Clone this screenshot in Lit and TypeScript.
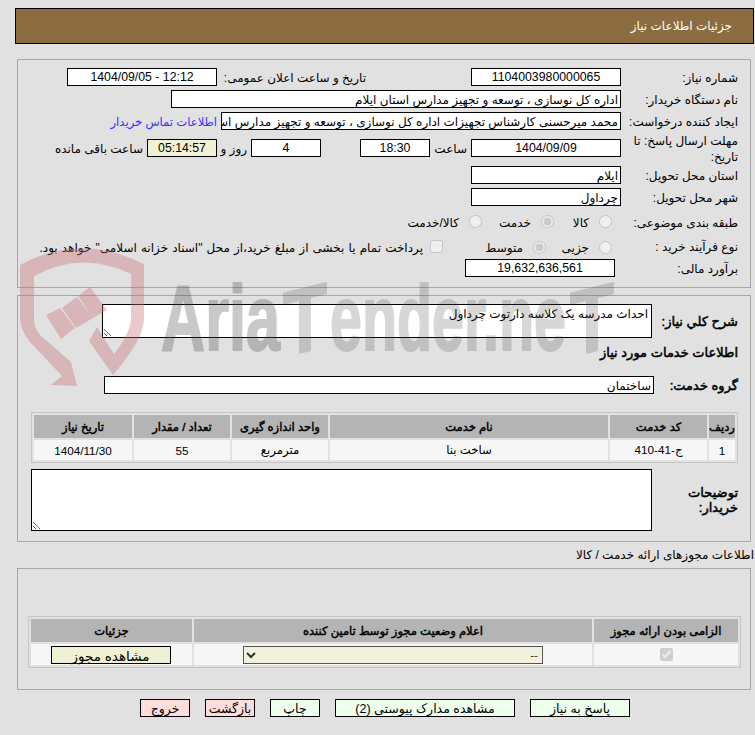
import { LitElement, html, css, svg } from "lit";
import { customElement } from "lit/decorators.js";

const serviceCols = ["c98", "c96", "c96", "c278", "c97", "c26"];

@customElement("app-root")
export class AppRoot extends LitElement {
  static styles = css`
    :host {
      display: block;
      position: relative;
      width: 755px;
      height: 735px;
      overflow: hidden;
      background: #e1e1e1;
      font-family: "Liberation Sans", "DejaVu Sans", sans-serif;
      font-size: 12px;
      color: #000;
      box-sizing: border-box;
      padding-top: 8px;
    }
    * { box-sizing: border-box; }
    .header {
      width: 739px;
      height: 36px;
      margin-left: 15px;
      background: #8c6d41;
      border: 1px solid #000;
      color: #fff;
      direction: rtl;
      display: flex;
      align-items: center;
      padding-right: 21px;
      font-size: 12px;
      line-height: 1;
    }
    .panel {
      width: 734px;
      margin-left: 17px;
      border: 1px solid #a6a6a6;
      direction: rtl;
      padding: 8px 12px 10px 0;
    }
    .p1 { margin-top: 15px; height: 229px; }
    .p2 { margin-top: 7px; height: 247px; }
    .p3 { height: 122px; padding: 47px 9px 0 0; }
    .section-title {
      direction: rtl;
      height: 26px;
      padding-right: 1px;
      display: flex;
      align-items: center;
    }
    .row { display: flex; align-items: center; height: 18px; margin-bottom: 4px; white-space: nowrap; }
    .tall { height: 28px; }
    .r7 { height: 22px; }
    .r8 { height: 20px; margin-bottom: 3px; }
    .r7 .l117 { padding-top: 4px; }
    .r8 input[type="radio"] { margin-top: 2px; }
    .l117 { width: 117px; flex: none; white-space: normal; line-height: 16px; padding-top: 2px; }
    .box {
      height: 18px;
      flex: none;
      background: #fff;
      border: 1px solid #000;
      display: flex;
      align-items: center;
      overflow: hidden;
      white-space: nowrap;
      padding: 2px 2px 0;
      line-height: 1;
    }
    .center { justify-content: center; font-size: 12.3px; padding: 0 2px; }
    .latin { direction: ltr; }
    .w150 { width: 150px; }
    .w450 { width: 450px; }
    .w400 { width: 400px; }
    .w70 { width: 70px; }
    .w550 { width: 550px; }
    .timer { background: #f0f0d2; }
    .ms105 { margin-inline-start: 105px; width: 149px; flex: none; padding-top: 2px; }
    .hour-label { width: 37px; flex: none; margin-inline-start: 4px; padding-top: 2px; }
    .day-box { margin-inline-start: 39px; }
    .day-label { width: 30px; flex: none; margin-inline-start: 4px; padding-top: 2px; }
    .remain { margin-inline-start: 4px; padding-top: 2px; }
    .link { color: #3333ff; margin-inline-start: 4px; font-size: 11.6px; padding-top: 1px; }
    .opt { display: flex; align-items: center; flex: none; }
    .opt input { margin: 0; flex: none; }
    .o66 { width: 67px; padding-right: 9px; }
    .o72 { width: 72px; }
    .o73 { width: 75px; padding-right: 9px; }
    .o103 { width: 103px; }
    .opt span { margin-inline-start: 10px; padding-top: 3px; }
    .opt .chk { margin-inline-start: 7px; word-spacing: 0.8px; }
    .l117f { width: 123px; flex: none; padding-top: 2px; }
    .bold { font-weight: 400; font-size: 13px; -webkit-text-stroke: 0.5px #000; }
    .l86 { width: 86px; flex: none; }
    .l84 { width: 84px; flex: none; }
    textarea {
      display: block;
      flex: none;
      background: #fff;
      border: 1px solid #000;
      border-radius: 0;
      padding: 2px 3px;
      margin: 0;
      font: inherit;
      direction: rtl;
      outline: none;
    }
    .ta1 { width: 550px; height: 34px; }
    .ta2 { width: 621px; height: 62px; }
    .row-ta1 { height: 34px; margin-bottom: 0; }
    .heading { height: 28px; margin-bottom: 10px; }
    .row-group { margin-bottom: 18px; }
    .row-ta2 { height: 62px; margin-top: 6px; margin-bottom: 0; }
    .l2 { width: 86px; flex: none; white-space: normal; line-height: 15px; }
    table {
      table-layout: fixed;
      border-collapse: separate;
      border-spacing: 2px;
      border: 1px solid #c6c6c6;
      direction: rtl;
    }
    .t-service { width: 707px; }
    .t-license { width: 713px; }
    th, td { padding: 0; text-align: center; overflow: hidden; white-space: nowrap; }
    th { background: #b4b4b4; height: 23px; font-size: 11.5px; font-weight: 400; -webkit-text-stroke: 0.45px #000; }
    td { background: #f6f6f6; font-size: 11.7px; }
    .t-service td { height: 20px; }
    .t-license td { height: 21px; }
    .c98 { width: 98px; } .c96 { width: 96px; } .c278 { width: 278px; } .c97 { width: 97px; } .c26 { width: 26px; }
    .c161 { width: 161px; } .c398 { width: 398px; } .c144 { width: 144px; }
    .cell-fill { display: flex; justify-content: center; align-items: center; }
    .see {
      width: 120px;
      height: 18px;
      padding: 1px 0 0;
      margin-inline-start: 2px;
      background: #f0f0d2;
      border: 1px solid #000;
      font: inherit;
      font-size: 13.5px;
      color: #000;
    }
    select {
      display: block;
      width: 300px;
      height: 18px;
      margin: 0 auto;
      background-color: #f2f2dc;
      border: 1px solid #555;
      border-radius: 0;
      font: inherit;
      direction: rtl;
      color: #333;
      opacity: 1;
    }
    .actions {
      direction: rtl;
      display: flex;
      gap: 15px;
      margin: 9px 125px 0 0;
    }
    .btn {
      height: 18px;
      padding: 1px 0 0;
      border: 1px solid #000;
      font: inherit;
      font-size: 12.5px;
      color: #000;
      background: #eeffee;
    }
    .b100 { width: 100px; } .b180 { width: 180px; } .b50 { width: 50px; }
    .red { background: #ffdddd; }
    .wm { position: absolute; left: 0; top: 0; pointer-events: none; }
    .wm-a { opacity: 0.3; }
    .wm-b { opacity: 0.22; }
    .wm-t {
      font-family: "Liberation Sans", sans-serif;
      font-weight: 700;
      font-size: 92px;
      fill: rgb(78, 78, 78);
      stroke: rgb(78, 78, 78);
      stroke-width: 2px;
      stroke-linejoin: round;
    }
    .wm-s { fill: rgb(200, 105, 110); fill-opacity: 0.37; }
  `;

  private radio(checked: boolean) {
    return html`<input type="radio" disabled ?checked=${checked} />`;
  }

  private watermark() {
    return svg`<svg class="wm" width="755" height="735" viewBox="0 0 755 735">
      <path class="wm-s" fill-rule="evenodd" d="M20 265 Q80 232 144 264 L144 320 Q143 340 113 375 L89 341 L97 327 L114 354 Q131 332 131 318 L131 274 Q82 250 34 276 L34 318 Q34 328 40 335 L71 362 L77 386 L51 385 L62 376 L30 342 Q20 330 20 318 Z"/>
      <path class="wm-s" d="M46 315 L60 308 L75 328 L61 339 Z M62 308 L77 297 L93 318 L76 328 Z M78 296 L90 287 L107 310 L93 318 Z"/>
      <g class="wm-a">
        <text class="wm-t" x="161" y="350" textLength="119" lengthAdjust="spacingAndGlyphs">Aria</text>
      </g>
      <g class="wm-b">
        <text class="wm-t" transform="translate(283 357) skewY(-14)" textLength="44" lengthAdjust="spacingAndGlyphs">T</text>
        <text class="wm-t" x="330" y="350" textLength="236" lengthAdjust="spacingAndGlyphs">ender.ne</text>
        <text class="wm-t" transform="translate(570 357) skewY(-14)" textLength="44" lengthAdjust="spacingAndGlyphs">T</text>
      </g>
    </svg>`;
  }

  render() {
    return html`
      <div class="header">جزئیات اطلاعات نیاز</div>

      <section class="panel p1">
        <div class="row">
          <div class="l117">شماره نیاز:</div>
          <div class="box w150 center">1104003980000065</div>
          <div class="ms105">تاریخ و ساعت اعلان عمومی:</div>
          <div class="box w150 center latin">1404/09/05 - 12:12</div>
        </div>
        <div class="row">
          <div class="l117">نام دستگاه خریدار:</div>
          <div class="box w450">اداره کل نوسازی ، توسعه و تجهیز مدارس استان ایلام</div>
        </div>
        <div class="row">
          <div class="l117">ایجاد کننده درخواست:</div>
          <div class="box w400">محمد میرحسنی کارشناس تجهیزات اداره کل نوسازی ، توسعه و تجهیز مدارس استان ایلام</div>
          <a class="link">اطلاعات تماس خریدار</a>
        </div>
        <div class="row tall">
          <div class="l117">مهلت ارسال پاسخ: تا تاریخ:</div>
          <div class="box w150 center">1404/09/09</div>
          <div class="hour-label">ساعت</div>
          <div class="box w70 center">18:30</div>
          <div class="box w70 center day-box">4</div>
          <div class="day-label">روز و</div>
          <div class="box w70 center timer">05:14:57</div>
          <div class="remain">ساعت باقی مانده</div>
        </div>
        <div class="row">
          <div class="l117">استان محل تحویل:</div>
          <div class="box w150">ایلام</div>
        </div>
        <div class="row">
          <div class="l117">شهر محل تحویل:</div>
          <div class="box w150">چرداول</div>
        </div>
        <div class="row r7">
          <div class="l117">طبقه بندی موضوعی:</div>
          <label class="opt o66">${this.radio(false)}<span>کالا</span></label>
          <label class="opt o72">${this.radio(true)}<span>خدمت</span></label>
          <label class="opt">${this.radio(false)}<span>کالا/خدمت</span></label>
        </div>
        <div class="row r8">
          <div class="l117">نوع فرآیند خرید :</div>
          <label class="opt o73">${this.radio(false)}<span>جزیی</span></label>
          <label class="opt o103">${this.radio(true)}<span>متوسط</span></label>
          <label class="opt"><input type="checkbox" disabled /><span class="chk">پرداخت تمام یا بخشی از مبلغ خرید،از محل "اسناد خزانه اسلامی" خواهد بود.</span></label>
        </div>
        <div class="row">
          <div class="l117f">برآورد مالی:</div>
          <div class="box w150 center">19,632,636,561</div>
        </div>
      </section>

      <section class="panel p2">
        <div class="row row-ta1">
          <div class="l86 bold">شرح کلي نیاز:</div>
          <textarea class="ta1" readonly>احداث مدرسه یک کلاسه دارتوت چرداول</textarea>
        </div>
        <div class="row heading bold">اطلاعات خدمات مورد نیاز</div>
        <div class="row row-group">
          <div class="l84 bold">گروه خدمت:</div>
          <div class="box w550">ساختمان</div>
        </div>
        <table class="t-service">
          <colgroup>
            ${[...serviceCols].reverse().map((c) => html`<col class=${c} />`)}
          </colgroup>
          <thead>
            <tr><th>ردیف</th><th>کد خدمت</th><th>نام خدمت</th><th>واحد اندازه گیری</th><th>تعداد / مقدار</th><th>تاریخ نیاز</th></tr>
          </thead>
          <tbody>
            <tr><td>1</td><td>ج-41-410</td><td>ساخت بنا</td><td>مترمربع</td><td>55</td><td>1404/11/30</td></tr>
          </tbody>
        </table>
        <div class="row row-ta2">
          <div class="l2 bold">توضیحات خریدار:</div>
          <textarea class="ta2" readonly></textarea>
        </div>
      </section>

      <div class="section-title">اطلاعات مجوزهای ارائه خدمت / کالا</div>

      <section class="panel p3">
        <table class="t-license">
          <colgroup><col class="c144" /><col class="c398" /><col class="c161" /></colgroup>
          <thead>
            <tr><th>الزامی بودن ارائه مجوز</th><th>اعلام وضعیت مجوز توسط تامین کننده</th><th>جزئیات</th></tr>
          </thead>
          <tbody>
            <tr>
              <td><div class="cell-fill"><input type="checkbox" disabled checked /></div></td>
              <td><select disabled><option>--</option></select></td>
              <td><div class="cell-fill"><button class="see">مشاهده مجوز</button></div></td>
            </tr>
          </tbody>
        </table>
      </section>

      <div class="actions">
        <button class="btn b100">پاسخ به نیاز</button>
        <button class="btn b180">مشاهده مدارک پیوستی (2)</button>
        <button class="btn b50">چاپ</button>
        <button class="btn b50 red">بازگشت</button>
        <button class="btn b50 red">خروج</button>
      </div>
      ${this.watermark()}
    `;
  }
}
